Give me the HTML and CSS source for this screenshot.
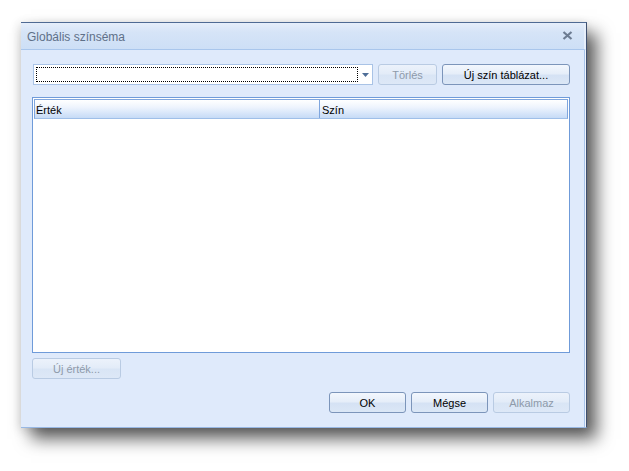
FILE: index.html
```html
<!DOCTYPE html>
<html>
<head>
<meta charset="utf-8">
<link rel="stylesheet" href="styles.css">
</head>
<body>
<div class="dialog">
  <div class="titlebar">
    <span class="title">Globális színséma</span>
    <svg class="close" width="11" height="9" viewBox="0 0 11 9"><path d="M1.5 1 L9.5 8 M9.5 1 L1.5 8" stroke="#6d7c92" stroke-width="2.2" fill="none"/></svg>
  </div>
  <div class="content">
    <div class="toprow">
      <div class="combo">
        <div class="focus"></div>
        <div class="arrow"><svg width="7" height="4" viewBox="0 0 7 4"><path d="M0 0 H7 L3.5 4 Z" fill="#4f6e98"/></svg></div>
      </div>
      <button class="btn disabled w-torles">Törlés</button>
      <button class="btn w-uj">Új szín táblázat...</button>
    </div>
    <div class="grid">
      <div class="ghead">
        <div class="gcol c1">Érték</div>
        <div class="gcol c2">Szín</div>
      </div>
    </div>
    <div class="midrow">
      <button class="btn disabled w-ertek">Új érték...</button>
    </div>
    <div class="bottomrow">
      <button class="btn w-b">OK</button>
      <button class="btn w-b">Mégse</button>
      <button class="btn disabled w-b">Alkalmaz</button>
    </div>
  </div>
</div>
</body>
</html>
```
FILE: styles.css
```css
html, body {
  margin: 0;
  padding: 0;
  background: #ffffff;
  width: 629px;
  height: 471px;
  overflow: hidden;
}
body {
  padding-top: 22px;
  padding-left: 21px;
  box-sizing: border-box;
  font-family: "Liberation Sans", Arial, sans-serif;
  font-size: 11px;
  color: #000;
}
.dialog {
  width: 566px;
  height: 406px;
  box-sizing: border-box;
  background: #dfeafb;
  border-top: 1px solid #4f6a93;
  border-right: 1px solid #3f5070;
  border-bottom: 1px solid #98b8e4;
  box-shadow: 10px 11px 16px rgba(0,0,0,0.62), -2px 2px 10px rgba(0,0,0,0.14);
  display: flex;
  flex-direction: column;
}
.titlebar {
  height: 27px;
  box-sizing: border-box;
  background: linear-gradient(#e6eefa 0%, #d6e4f7 35%, #cddff6 100%);
  border-bottom: 1px solid #a9c6ec;
  border-right: 2px solid #e6eefa;
  display: flex;
  align-items: center;
  padding: 0 10px 0 6px;
  justify-content: space-between;
}
.title {
  font-size: 12px;
  color: #5f7088;
  padding-top: 1px;
}
.close {
  margin-top: -2px;
  margin-right: 1px;
}
.content {
  flex: 1;
  border-right: 2px solid #eef3fb;
  padding: 14px 14px 0 11px;
  display: flex;
  flex-direction: column;
  position: relative;
}
.content::after {
  content: "";
  position: absolute;
  right: -1px;
  top: 0;
  bottom: 0;
  width: 1px;
  background: #a7c3ea;
}
.toprow {
  display: flex;
  gap: 5px;
  height: 21px;
  padding-left: 1px;
}
.combo {
  width: 340px;
  height: 21px;
  box-sizing: border-box;
  background: #fff;
  border: 1px solid #a9c3e6;
  display: flex;
  align-items: stretch;
  padding: 2px 0 2px 2px;
}
.focus {
  flex: 1;
  border: 1px dotted #000;
}
.arrow {
  width: 14px;
  display: flex;
  align-items: center;
  justify-content: center;
  padding-top: 1px;
}
.btn {
  height: 21px;
  box-sizing: border-box;
  border: 1px solid #7c95ba;
  border-radius: 3px;
  background: linear-gradient(#f3f7fd 0%, #e6eef9 45%, #d5e2f4 55%, #dbe7f6 100%);
  font-family: "Liberation Sans", Arial, sans-serif;
  font-size: 11px;
  color: #000;
  padding: 0;
  margin: 0;
}
.btn.disabled {
  border-color: #b9cbe3;
  color: #8e9aaa;
  background: linear-gradient(#ecf2fb 0%, #e3ecf8 45%, #d9e5f5 55%, #dde8f7 100%);
}
.w-torles { width: 59px; }
.w-uj { width: 128px; }
.w-ertek { width: 89px; }
.w-b { width: 77px; }
.grid {
  margin-top: 12px;
  height: 256px;
  box-sizing: border-box;
  border: 1px solid #6f9bd9;
  background: #fff;
  padding: 1px;
}
.ghead {
  display: flex;
  height: 20px;
  box-sizing: border-box;
  border: 1px solid #7fa6de;
  border-bottom-color: #9fbfe9;
  background: linear-gradient(#ffffff 0%, #eef4fd 40%, #d3e3f9 80%, #c6dbf6 100%);
}
.gcol {
  display: flex;
  align-items: center;
  padding-left: 1px;
  padding-top: 1px;
  color: #000;
}
.c1 {
  width: 283px;
  border-right: 1px solid #7fa6de;
}
.c2 {
  flex: 1;
  padding-left: 2px;
}
.midrow {
  margin-top: 5px;
  display: flex;
}
.bottomrow {
  margin-top: 13px;
  display: flex;
  justify-content: flex-end;
  gap: 5px;
}
```
